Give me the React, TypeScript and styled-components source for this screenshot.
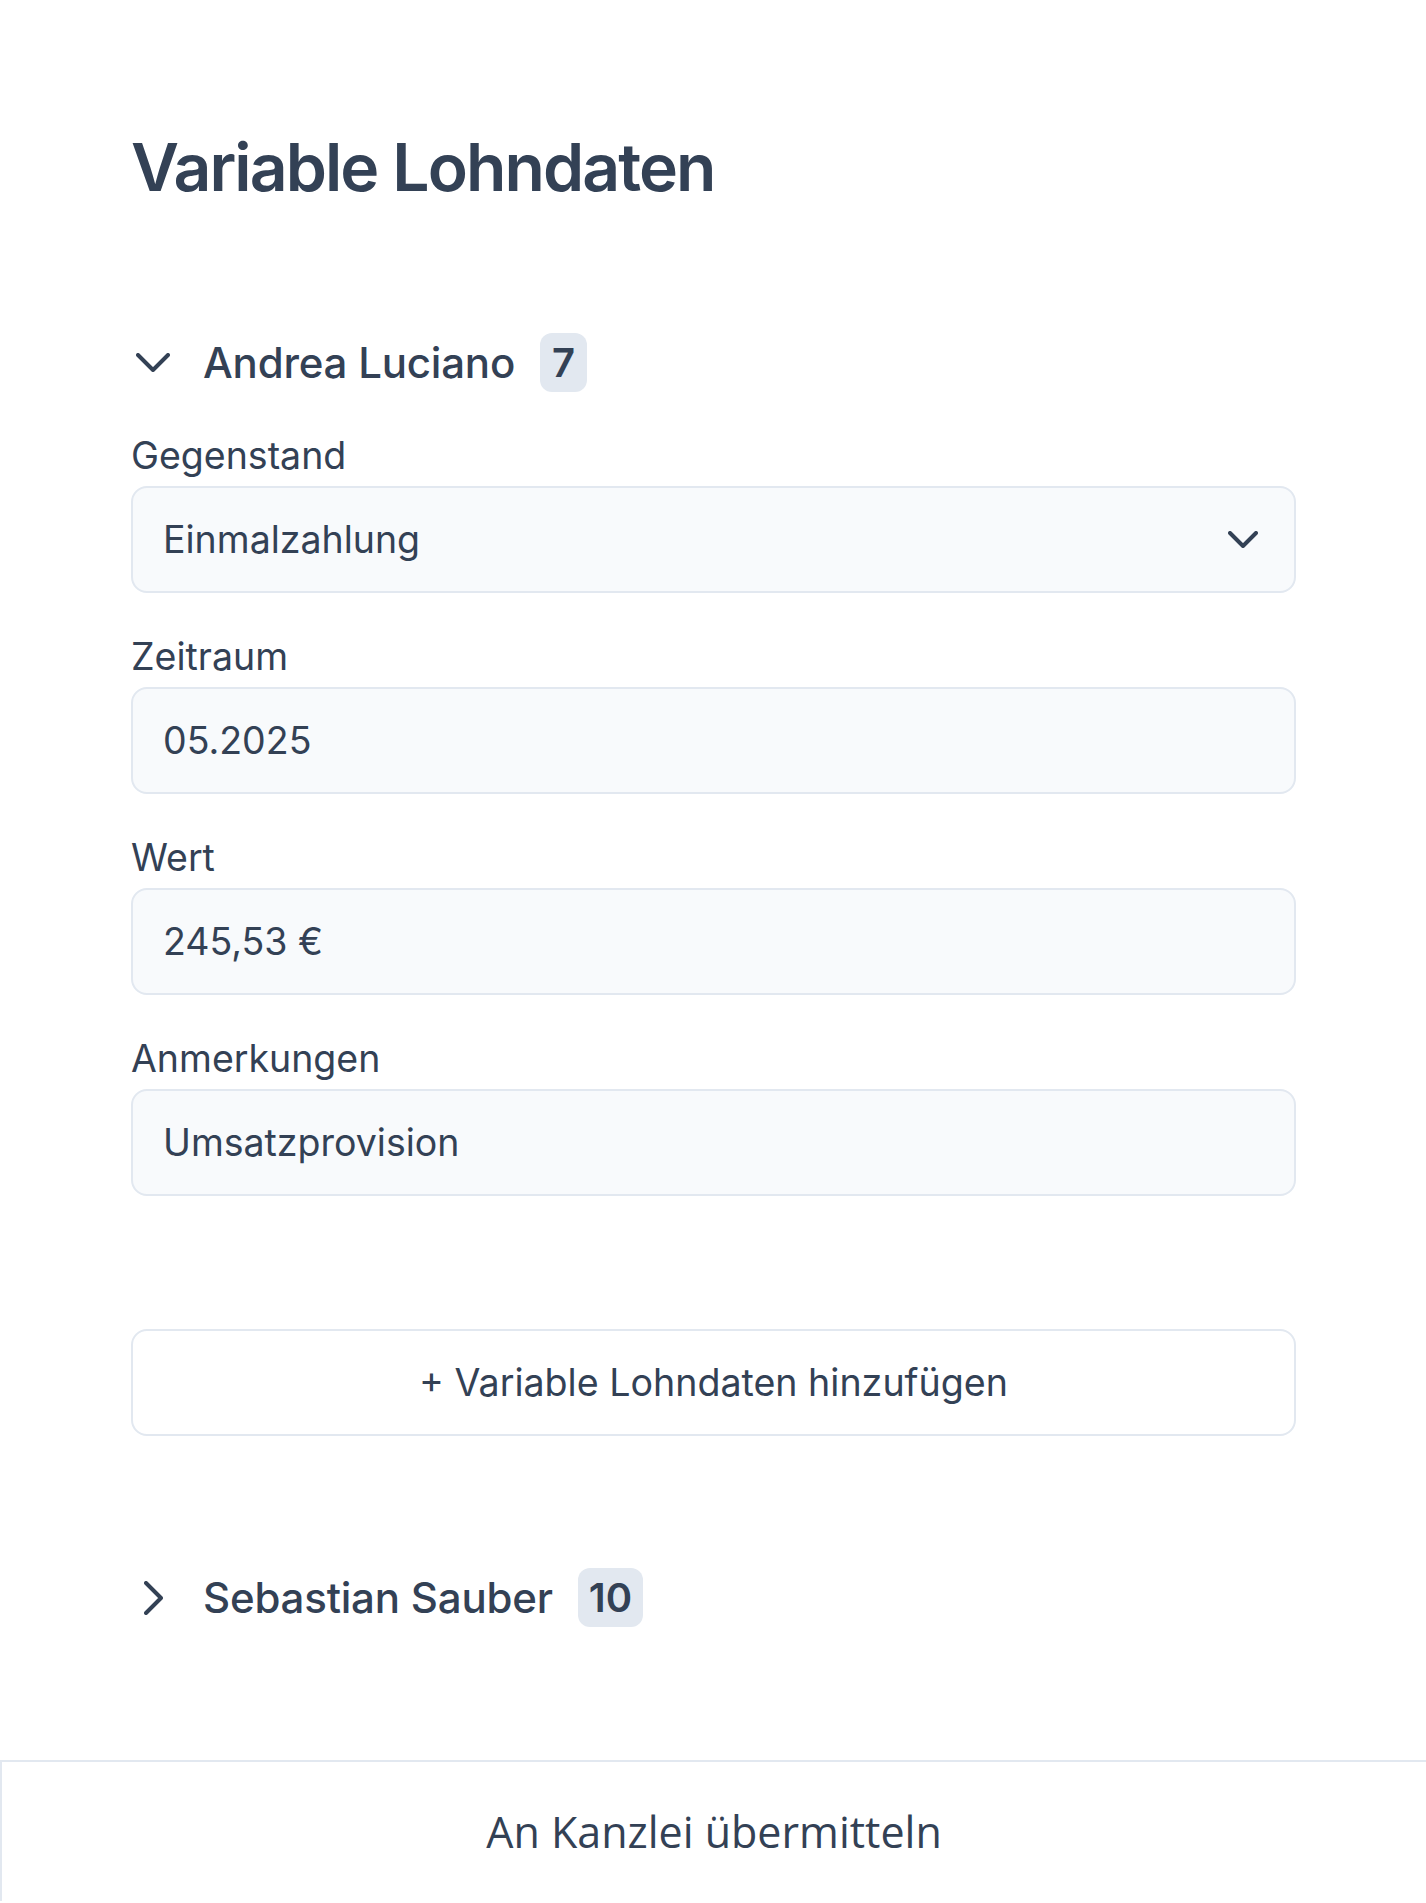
import React, { useState } from "react";
import styled, { createGlobalStyle } from "styled-components";

const GlobalStyle = createGlobalStyle`
  * {
    box-sizing: border-box;
  }
  body {
    margin: 0;
    background: #ffffff;
    font-family: Inter, "Noto Sans", sans-serif;
    color: #334155;
  }
`;

const Page = styled.div`
  padding: 128px 130px 0 131px;
`;

const Title = styled.h1`
  margin: 0;
  font-size: 66px;
  line-height: 79px;
  font-weight: 600;
  letter-spacing: -1.9px;
  color: #334155;
`;

const EmployeeHeader = styled.button<{ $first?: boolean }>`
  display: flex;
  align-items: center;
  height: 59px;
  margin-top: ${(p) => (p.$first ? "126px" : "132px")};
  padding: 0;
  border: 0;
  background: none;
  cursor: pointer;
  font-family: inherit;
  color: #334155;
`;

const ChevronBox = styled.span`
  display: flex;
  align-items: center;
  justify-content: center;
  width: 44px;
  height: 44px;
  margin-right: 28px;
`;

const Name = styled.span`
  font-size: 42px;
  font-weight: 500;
  line-height: 59px;
  letter-spacing: -0.2px;
`;

const Badge = styled.span`
  display: inline-flex;
  align-items: center;
  justify-content: center;
  height: 59px;
  min-width: 47px;
  padding: 0 11px;
  margin-left: 25px;
  border-radius: 12px;
  background: #e2e8f0;
  font-size: 40px;
  font-weight: 600;
  color: #334155;
`;

const Fields = styled.div`
  display: flex;
  flex-direction: column;
  gap: 37px;
  margin-top: 37px;
`;

const Field = styled.div`
  display: flex;
  flex-direction: column;
`;

const Label = styled.label`
  font-size: 37.5px;
  line-height: 54px;
  margin-bottom: 3px;
  color: #334155;
`;

const InputBox = styled.div`
  display: flex;
  align-items: center;
  justify-content: space-between;
  height: 107px;
  padding: 0 36px 0 30px;
  border: 2px solid #e2e8f0;
  border-radius: 16px;
  background: #f8fafc;
  font-size: 37.5px;
  color: #334155;
`;

const AddButton = styled.button`
  display: flex;
  align-items: center;
  justify-content: center;
  width: 100%;
  height: 107px;
  margin-top: 133px;
  border: 2px solid #e2e8f0;
  border-radius: 16px;
  background: #ffffff;
  font-family: inherit;
  font-size: 37.6px;
  color: #334155;
  cursor: pointer;
`;

const Footer = styled.footer`
  display: flex;
  align-items: center;
  justify-content: center;
  height: 141px;
  margin-top: 133px;
  border-top: 2px solid #e2e8f0;
  border-left: 2px solid #e2e8f0;
  font-family: "Open Sans", "Noto Sans", sans-serif;
  font-size: 43px;
  color: #334155;
`;

const ChevronDown = ({ w = 34, h = 19 }: { w?: number; h?: number }) => (
  <svg width={w} height={h} viewBox={`0 0 ${w} ${h}`} fill="none">
    <path
      d={`M2 2 L${w / 2} ${h - 2} L${w - 2} 2`}
      stroke="#334155"
      strokeWidth="4"
      strokeLinecap="round"
      strokeLinejoin="round"
    />
  </svg>
);

const ChevronRight = () => (
  <svg width="19" height="34" viewBox="0 0 19 34" fill="none">
    <path
      d="M2 2 L17 17 L2 32"
      stroke="#334155"
      strokeWidth="4"
      strokeLinecap="round"
      strokeLinejoin="round"
    />
  </svg>
);

const fields = [
  { label: "Zeitraum", value: "05.2025" },
  { label: "Wert", value: "245,53 €" },
  { label: "Anmerkungen", value: "Umsatzprovision" },
];

const App = () => {
  const [open, setOpen] = useState(true);

  return (
    <>
      <GlobalStyle />
      <Page>
        <Title>Variable Lohndaten</Title>

        <EmployeeHeader $first onClick={() => setOpen(!open)}>
          <ChevronBox>{open ? <ChevronDown /> : <ChevronRight />}</ChevronBox>
          <Name>Andrea Luciano</Name>
          <Badge>7</Badge>
        </EmployeeHeader>

        {open && (
          <>
            <Fields>
              <Field>
                <Label>Gegenstand</Label>
                <InputBox>
                  <span>Einmalzahlung</span>
                  <ChevronDown w={30} h={17} />
                </InputBox>
              </Field>
              {fields.map((f) => (
                <Field key={f.label}>
                  <Label>{f.label}</Label>
                  <InputBox>{f.value}</InputBox>
                </Field>
              ))}
            </Fields>
            <AddButton>+ Variable Lohndaten hinzufügen</AddButton>
          </>
        )}

        <EmployeeHeader>
          <ChevronBox>
            <ChevronRight />
          </ChevronBox>
          <Name>Sebastian Sauber</Name>
          <Badge>10</Badge>
        </EmployeeHeader>
      </Page>
      <Footer>An Kanzlei übermitteln</Footer>
    </>
  );
};

export default App;
